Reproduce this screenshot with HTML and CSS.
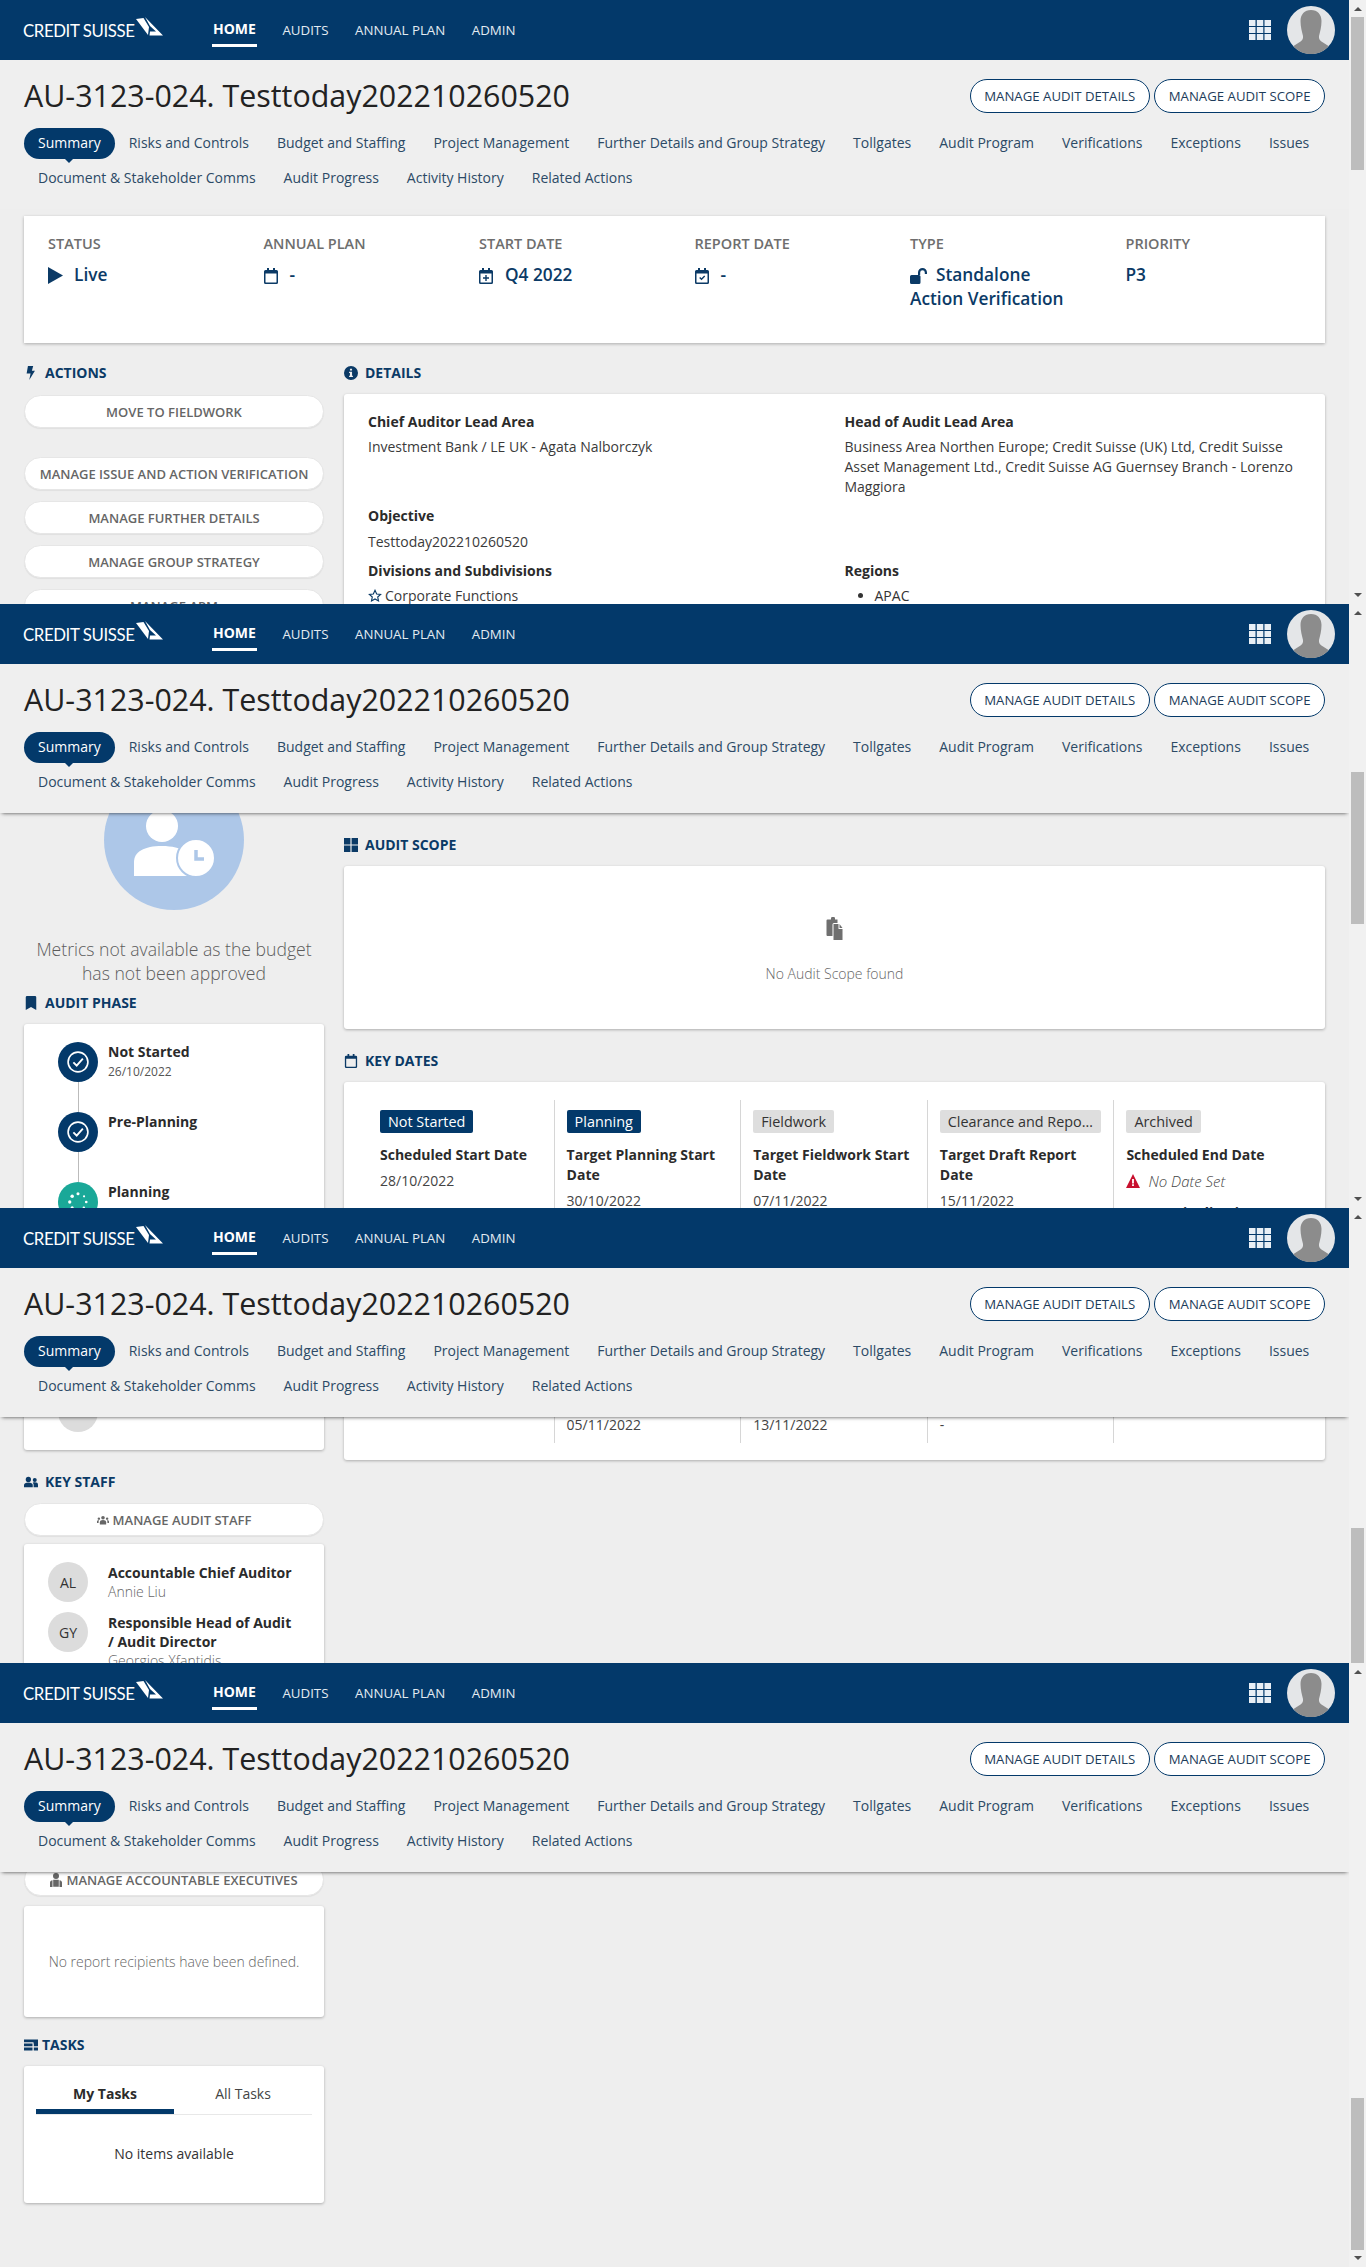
FILE: index.html
```html
<!DOCTYPE html>
<html lang="en">
<head>
<meta charset="utf-8">
<title>AU-3123-024. Testtoday202210260520</title>
<link rel="stylesheet" href="styles.css">
</head>
<body>
<svg class="sprite" xmlns="http://www.w3.org/2000/svg">
  <symbol id="i-logo" viewBox="0 0 28 20"><path d="M0 2 L7.5 1 L13 10 L12 18 Z"/><path d="M9 0 L27 18.500 L13.500 18.500 L14 14.500 L20 14.500 L14 9 Z"/></symbol>
  <symbol id="i-grid" viewBox="0 0 22 20"><path d="M0 0h6.5v6H0zM7.8 0h6.5v6H7.8zM15.5 0H22v6h-6.5zM0 7h6.5v6H0zM7.8 7h6.5v6H7.8zM15.5 7H22v6h-6.5zM0 14h6.5v6H0zM7.8 14h6.5v6H7.8zM15.5 14H22v6h-6.5z"/></symbol>
  <symbol id="i-avatar" viewBox="0 0 48 48"><circle cx="24" cy="24" r="24" fill="#e4e6e8"/><path d="M24 4c6.5 0 10.5 4.5 10.5 11 0 6-1.5 11-2.500 15-.5 3 1 5 4 6.500l5.500 3.500C37.500 45.500 31 48 24 48s-13.500-2.500-17.500-8L12 36.500c3-1.500 4.500-3.500 4-6.500-1-4-2.500-9-2.500-15C13.500 8.500 17.500 4 24 4z" fill="#8c8c8c"/></symbol>
  <symbol id="i-play" viewBox="0 0 16 18"><path d="M0 0l16 9L0 18z"/></symbol>
  <symbol id="i-cal" viewBox="0 0 14 16"><path d="M3 0h2v2h4V0h2v2h1.500A1.500 1.500 0 0 1 14 3.500v11a1.500 1.500 0 0 1-1.500 1.500h-11A1.500 1.500 0 0 1 0 14.500v-11A1.500 1.500 0 0 1 1.500 2H3zM1.500 5.500v8.500a.5.500 0 0 0 .5.500h10a.5.500 0 0 0 .5-.5V5.500z"/></symbol>
  <symbol id="i-calplus" viewBox="0 0 14 16"><path d="M3 0h2v2h4V0h2v2h1.500A1.500 1.500 0 0 1 14 3.500v11a1.500 1.500 0 0 1-1.500 1.500h-11A1.500 1.500 0 0 1 0 14.500v-11A1.500 1.500 0 0 1 1.500 2H3zM1.500 5.500v8.500a.5.500 0 0 0 .5.500h10a.5.500 0 0 0 .5-.5V5.500z"/><path d="M6.300 7h1.400v2.300H10v1.400H7.700V13H6.300v-2.300H4V9.300h2.300z"/></symbol>
  <symbol id="i-calcheck" viewBox="0 0 14 16"><path d="M3 0h2v2h4V0h2v2h1.500A1.500 1.500 0 0 1 14 3.500v11a1.500 1.500 0 0 1-1.500 1.500h-11A1.500 1.500 0 0 1 0 14.500v-11A1.500 1.500 0 0 1 1.500 2H3zM1.500 5.500v8.500a.5.500 0 0 0 .5.500h10a.5.500 0 0 0 .5-.5V5.500z"/><path d="M4.200 10l1 -1 1.300 1.300 2.700-2.800 1 1-3.700 3.800z"/></symbol>
  <symbol id="i-unlock" viewBox="0 0 17 16"><path d="M0 8.500A1.500 1.500 0 0 1 1.500 7H9a1.500 1.500 0 0 1 1.500 1.500V14.500A1.500 1.500 0 0 1 9 16H1.500A1.500 1.500 0 0 1 0 14.500z"/><path d="M8 7V4.500a4.500 4.500 0 0 1 9 0V6h-2.200V4.500a2.300 2.300 0 0 0-4.600 0V7z"/></symbol>
  <symbol id="i-bolt" viewBox="0 0 10 16"><path d="M1.500 0h6L6 5.500h3.500L3 16l1.500-7.500H0z"/></symbol>
  <symbol id="i-info" viewBox="0 0 16 16"><path fill-rule="evenodd" d="M8 0a8 8 0 1 1 0 16A8 8 0 0 1 8 0zM6.800 3v2.200h2.400V3zM5.800 6.500v1.400h1v3.300h-1v1.400h4.400v-1.400h-1V6.500z"/></symbol>
  <symbol id="i-star" viewBox="0 0 16 16"><path fill="none" stroke="currentColor" stroke-width="1.300" d="M8 1.500l1.900 4.200 4.500.5-3.300 3 .9 4.500L8 11.400l-4 2.300.9-4.500-3.300-3 4.500-.5z"/></symbol>
  <symbol id="i-bookmark" viewBox="0 0 12 16"><path d="M0 1.500A1.500 1.500 0 0 1 1.500 0h9A1.500 1.500 0 0 1 12 1.500V16L6 12.500 0 16z"/></symbol>
  <symbol id="i-squares" viewBox="0 0 14 14"><path d="M0 0h6.400v6.400H0zM7.600 0H14v6.400H7.600zM0 7.600h6.400V14H0zM7.600 7.600H14V14H7.600z"/></symbol>
  <symbol id="i-files" viewBox="0 0 16 23"><path d="M2 2.500h2.500V1.200A1.200 1.200 0 0 1 5.700 0h1.600a1.200 1.200 0 0 1 1.200 1.200v1.300H11V6H7.500A1.500 1.500 0 0 0 6 7.500V19H1a1 1 0 0 1-1-1V3.500a1 1 0 0 1 1-1z"/><path d="M7 7h5v5h4v11H7z"/><path d="M13 7l3 4h-3z"/></symbol>
  <symbol id="i-check" viewBox="0 0 20 20"><circle cx="10" cy="10" r="9" fill="none" stroke="#fff" stroke-width="1.500"/><path d="M5.800 10.400l3 3 5.600-6.400" fill="none" stroke="#fff" stroke-width="1.700"/></symbol>
  <symbol id="i-spin" viewBox="0 0 20 20" fill="#fff"><circle cx="10" cy="2.500" r="1.400"/><circle cx="15.500" cy="4.800" r="1"/><circle cx="17.500" cy="10" r="1.200"/><circle cx="15.300" cy="15.300" r="1.100"/><circle cx="10" cy="17.500" r="1.300"/><circle cx="4.700" cy="15.300" r="1.400"/><circle cx="2.500" cy="10" r="1.500"/><circle cx="4.700" cy="4.700" r="1.600"/></symbol>
  <symbol id="i-warn" viewBox="0 0 14 14"><path fill-rule="evenodd" d="M7 0l7 14H0zM6.100 5v4.500h1.800V5zM6.100 10.300V12h1.800v-1.700z"/></symbol>
  <symbol id="i-users" viewBox="0 0 16 12"><circle cx="5" cy="3" r="3"/><path d="M0 12V9.500C0 7.500 2 6.500 5 6.500s5 1 5 3V12z"/><circle cx="12.300" cy="3.800" r="2.300"/><path d="M11 12V9.200c0-1-.4-1.800-1-2.400.7-.3 1.500-.4 2.300-.4 2.200 0 3.700 .9 3.700 2.600v3z"/></symbol>
  <symbol id="i-team" viewBox="0 0 16 12"><circle cx="8" cy="3" r="2.400"/><path d="M3.800 12V9c0-1.800 1.900-3 4.200-3s4.200 1.200 4.200 3v3z"/><circle cx="2.500" cy="4.200" r="1.600"/><circle cx="13.500" cy="4.200" r="1.600"/><path d="M0 10V8c0-1 .8-1.700 2.800-1.700-.4.600-.7 1.400-.7 2.400v1.300zM16 10V8c0-1-.8-1.700-2.800-1.700.4.600.7 1.400.7 2.400v1.300z"/></symbol>
  <symbol id="i-exec" viewBox="0 0 12 14"><circle cx="6" cy="3" r="3"/><path d="M3.200 6.800h5.600v7H3.200zM0 14v-4.500c0-1.200 1-2 2.500-2.300V14zM12 14V9.500c0-1.200-1-2-2.500-2.300V14z"/></symbol>
  <symbol id="i-tasks" viewBox="0 0 14 11"><path d="M0 0h14v2.700H0zM0 4h8.500v2.700H0zM9.800 4H14v2.700H9.800zM0 8h8.500v3H0zM9.800 8H14v3H9.800zM9.500 2.700H14V4H9.500z"/></symbol>
</svg>

<section class="frame frame-1">
  <div class="main">
    <header class="topbar">
      <div class="brand"><span class="brand-name">CREDIT SUISSE</span><svg class="brand-mark"><use href="#i-logo"/></svg></div>
      <nav class="topnav"><a class="topnav-item active">HOME</a><a class="topnav-item">AUDITS</a><a class="topnav-item">ANNUAL PLAN</a><a class="topnav-item">ADMIN</a></nav>
      <svg class="apps"><use href="#i-grid"/></svg>
      <svg class="avatar"><use href="#i-avatar"/></svg>
    </header>
    <div class="subhead flat">
      <div class="title-row"><h1>AU-3123-024. Testtoday202210260520</h1><div class="title-actions"><a class="outline-btn">MANAGE AUDIT DETAILS</a><a class="outline-btn">MANAGE AUDIT SCOPE</a></div></div>
      <ul class="tabs"><li class="tab active">Summary</li><li class="tab">Risks and Controls</li><li class="tab">Budget and Staffing</li><li class="tab">Project Management</li><li class="tab">Further Details and Group Strategy</li><li class="tab">Tollgates</li><li class="tab">Audit Program</li><li class="tab">Verifications</li><li class="tab">Exceptions</li><li class="tab">Issues</li><li class="tab">Document &amp; Stakeholder Comms</li><li class="tab">Audit Progress</li><li class="tab">Activity History</li><li class="tab">Related Actions</li></ul>
    </div>
    <div class="summary card">
      <div class="fact"><div class="fact-label">STATUS</div><div class="fact-value"><svg class="fact-ico play"><use href="#i-play"/></svg>Live</div></div>
      <div class="fact"><div class="fact-label">ANNUAL PLAN</div><div class="fact-value"><svg class="fact-ico"><use href="#i-cal"/></svg>-</div></div>
      <div class="fact"><div class="fact-label">START DATE</div><div class="fact-value"><svg class="fact-ico"><use href="#i-calplus"/></svg>Q4 2022</div></div>
      <div class="fact"><div class="fact-label">REPORT DATE</div><div class="fact-value"><svg class="fact-ico"><use href="#i-calcheck"/></svg>-</div></div>
      <div class="fact"><div class="fact-label">TYPE</div><div class="fact-value"><svg class="fact-ico wide"><use href="#i-unlock"/></svg>Standalone Action Verification</div></div>
      <div class="fact"><div class="fact-label">PRIORITY</div><div class="fact-value">P3</div></div>
    </div>
    <div class="columns first">
      <div class="left">
        <h2 class="sec-title"><svg><use href="#i-bolt"/></svg>ACTIONS</h2>
        <div class="stack">
          <a class="pill gap-after">MOVE TO FIELDWORK</a>
          <a class="pill">MANAGE ISSUE AND ACTION VERIFICATION</a>
          <a class="pill">MANAGE FURTHER DETAILS</a>
          <a class="pill">MANAGE GROUP STRATEGY</a>
          <a class="pill">MANAGE APM</a>
        </div>
      </div>
      <div class="right">
        <h2 class="sec-title"><svg><use href="#i-info"/></svg>DETAILS</h2>
        <div class="card details">
          <div class="detail"><h3>Chief Auditor Lead Area</h3><p>Investment Bank / LE UK - Agata Nalborczyk</p></div>
          <div class="detail"><h3>Head of Audit Lead Area</h3><p>Business Area Northen Europe; Credit Suisse (UK) Ltd, Credit Suisse Asset Management Ltd., Credit Suisse AG Guernsey Branch - Lorenzo Maggiora</p></div>
          <div class="detail full"><h3>Objective</h3><p>Testtoday202210260520</p></div>
          <div class="detail"><h3>Divisions and Subdivisions</h3><p><svg class="star"><use href="#i-star"/></svg>Corporate Functions</p></div>
          <div class="detail"><h3>Regions</h3><ul class="regions"><li>APAC</li></ul></div>
        </div>
      </div>
    </div>
  </div>
  <div class="scrollbar"><i class="arrow up"></i><i class="thumb t1"></i><i class="arrow down"></i></div>
</section>

<section class="frame frame-2">
  <div class="main">
    <header class="topbar">
      <div class="brand"><span class="brand-name">CREDIT SUISSE</span><svg class="brand-mark"><use href="#i-logo"/></svg></div>
      <nav class="topnav"><a class="topnav-item active">HOME</a><a class="topnav-item">AUDITS</a><a class="topnav-item">ANNUAL PLAN</a><a class="topnav-item">ADMIN</a></nav>
      <svg class="apps"><use href="#i-grid"/></svg>
      <svg class="avatar"><use href="#i-avatar"/></svg>
    </header>
    <div class="subhead">
      <div class="title-row"><h1>AU-3123-024. Testtoday202210260520</h1><div class="title-actions"><a class="outline-btn">MANAGE AUDIT DETAILS</a><a class="outline-btn">MANAGE AUDIT SCOPE</a></div></div>
      <ul class="tabs"><li class="tab active">Summary</li><li class="tab">Risks and Controls</li><li class="tab">Budget and Staffing</li><li class="tab">Project Management</li><li class="tab">Further Details and Group Strategy</li><li class="tab">Tollgates</li><li class="tab">Audit Program</li><li class="tab">Verifications</li><li class="tab">Exceptions</li><li class="tab">Issues</li><li class="tab">Document &amp; Stakeholder Comms</li><li class="tab">Audit Progress</li><li class="tab">Activity History</li><li class="tab">Related Actions</li></ul>
    </div>
    <div class="columns second">
      <div class="left">
        <div class="metric-pic">
          <svg class="metric-svg" viewBox="0 0 140 140"><circle cx="70" cy="70" r="70" fill="#adc7e8"/><circle cx="58" cy="56" r="16" fill="#fff"/><path d="M30 106V92c0-10 10-16 28-16 10 0 18 2 24 6l4 24z" fill="#fff"/><circle cx="92" cy="88" r="19" fill="#fff" stroke="#adc7e8" stroke-width="2"/><path d="M92 80v9h8" fill="none" stroke="#adc7e8" stroke-width="3.500"/></svg>
        </div>
        <p class="metric-note">Metrics not available as the budget has not been approved</p>
        <h2 class="sec-title tight"><svg><use href="#i-bookmark"/></svg>AUDIT PHASE</h2>
        <div class="card phases">
          <div class="phase"><span class="phase-dot done"><svg><use href="#i-check"/></svg></span><div><h3>Not Started</h3><small>26/10/2022</small></div></div>
          <div class="phase"><span class="phase-dot done"><svg><use href="#i-check"/></svg></span><div><h3>Pre-Planning</h3></div></div>
          <div class="phase"><span class="phase-dot now"><svg><use href="#i-spin"/></svg></span><div><h3>Planning</h3></div></div>
        </div>
      </div>
      <div class="right pushed">
        <h2 class="sec-title"><svg><use href="#i-squares"/></svg>AUDIT SCOPE</h2>
        <div class="card empty-scope"><svg class="files"><use href="#i-files"/></svg><p>No Audit Scope found</p></div>
        <h2 class="sec-title spaced"><svg><use href="#i-cal"/></svg>KEY DATES</h2>
        <div class="card dates">
          <div class="date-col"><span class="tag on">Not Started</span><h3>Scheduled Start Date</h3><p>28/10/2022</p></div>
          <div class="date-col"><span class="tag on">Planning</span><h3>Target Planning Start Date</h3><p>30/10/2022</p></div>
          <div class="date-col"><span class="tag">Fieldwork</span><h3>Target Fieldwork Start Date</h3><p>07/11/2022</p></div>
          <div class="date-col"><span class="tag">Clearance and Reporting</span><h3>Target Draft Report Date</h3><p>15/11/2022</p></div>
          <div class="date-col"><span class="tag">Archived</span><h3>Scheduled End Date</h3><p class="no-date"><svg><use href="#i-warn"/></svg>No Date Set</p><h3 class="next">Target Finalisation</h3></div>
        </div>
      </div>
    </div>
  </div>
  <div class="scrollbar"><i class="arrow up"></i><i class="thumb t2"></i><i class="arrow down"></i></div>
</section>

<section class="frame frame-3">
  <div class="main">
    <header class="topbar">
      <div class="brand"><span class="brand-name">CREDIT SUISSE</span><svg class="brand-mark"><use href="#i-logo"/></svg></div>
      <nav class="topnav"><a class="topnav-item active">HOME</a><a class="topnav-item">AUDITS</a><a class="topnav-item">ANNUAL PLAN</a><a class="topnav-item">ADMIN</a></nav>
      <svg class="apps"><use href="#i-grid"/></svg>
      <svg class="avatar"><use href="#i-avatar"/></svg>
    </header>
    <div class="subhead">
      <div class="title-row"><h1>AU-3123-024. Testtoday202210260520</h1><div class="title-actions"><a class="outline-btn">MANAGE AUDIT DETAILS</a><a class="outline-btn">MANAGE AUDIT SCOPE</a></div></div>
      <ul class="tabs"><li class="tab active">Summary</li><li class="tab">Risks and Controls</li><li class="tab">Budget and Staffing</li><li class="tab">Project Management</li><li class="tab">Further Details and Group Strategy</li><li class="tab">Tollgates</li><li class="tab">Audit Program</li><li class="tab">Verifications</li><li class="tab">Exceptions</li><li class="tab">Issues</li><li class="tab">Document &amp; Stakeholder Comms</li><li class="tab">Audit Progress</li><li class="tab">Activity History</li><li class="tab">Related Actions</li></ul>
    </div>
    <div class="columns third">
      <div class="left">
        <div class="card phases-end"><span class="phase-dot idle"></span></div>
        <h2 class="sec-title spaced"><svg><use href="#i-users"/></svg>KEY STAFF</h2>
        <a class="pill staff-btn"><svg><use href="#i-team"/></svg>MANAGE AUDIT STAFF</a>
        <div class="card staff">
          <div class="person"><span class="initials">AL</span><div class="person-text"><h3>Accountable Chief Auditor</h3><small>Annie Liu</small></div></div>
          <div class="person"><span class="initials">GY</span><div class="person-text"><h3>Responsible Head of Audit / Audit Director</h3><small>Georgios Xfantidis</small></div></div>
        </div>
      </div>
      <div class="right">
        <div class="card dates-end">
          <div class="date-col"></div>
          <div class="date-col"><p>05/11/2022</p></div>
          <div class="date-col"><p>13/11/2022</p></div>
          <div class="date-col"><p>-</p></div>
          <div class="date-col"></div>
        </div>
      </div>
    </div>
  </div>
  <div class="scrollbar"><i class="arrow up"></i><i class="thumb t3"></i></div>
</section>

<section class="frame frame-4">
  <div class="main">
    <header class="topbar">
      <div class="brand"><span class="brand-name">CREDIT SUISSE</span><svg class="brand-mark"><use href="#i-logo"/></svg></div>
      <nav class="topnav"><a class="topnav-item active">HOME</a><a class="topnav-item">AUDITS</a><a class="topnav-item">ANNUAL PLAN</a><a class="topnav-item">ADMIN</a></nav>
      <svg class="apps"><use href="#i-grid"/></svg>
      <svg class="avatar"><use href="#i-avatar"/></svg>
    </header>
    <div class="subhead">
      <div class="title-row"><h1>AU-3123-024. Testtoday202210260520</h1><div class="title-actions"><a class="outline-btn">MANAGE AUDIT DETAILS</a><a class="outline-btn">MANAGE AUDIT SCOPE</a></div></div>
      <ul class="tabs"><li class="tab active">Summary</li><li class="tab">Risks and Controls</li><li class="tab">Budget and Staffing</li><li class="tab">Project Management</li><li class="tab">Further Details and Group Strategy</li><li class="tab">Tollgates</li><li class="tab">Audit Program</li><li class="tab">Verifications</li><li class="tab">Exceptions</li><li class="tab">Issues</li><li class="tab">Document &amp; Stakeholder Comms</li><li class="tab">Audit Progress</li><li class="tab">Activity History</li><li class="tab">Related Actions</li></ul>
    </div>
    <div class="columns fourth">
      <div class="left">
        <a class="pill staff-btn exec"><svg><use href="#i-exec"/></svg>MANAGE ACCOUNTABLE EXECUTIVES</a>
        <div class="card recipients"><p>No report recipients have been defined.</p></div>
        <h2 class="sec-title close"><svg><use href="#i-tasks"/></svg>TASKS</h2>
        <div class="card tasks">
          <div class="task-tabs"><span class="task-tab active">My Tasks</span><span class="task-tab">All Tasks</span></div>
          <p>No items available</p>
        </div>
      </div>
    </div>
  </div>
  <div class="scrollbar"><i class="arrow up"></i><i class="thumb t4"></i><i class="arrow down"></i></div>
</section>
</body>
</html>
```

FILE: styles.css
```css
* { box-sizing: border-box; }
html, body { margin: 0; padding: 0; }
body { background: #eeeeee; font-family: "Open Sans", "Liberation Sans", sans-serif; font-size: 14px; color: #333; width: 1366px; }
h1, h2, h3, p, ul { margin: 0; padding: 0; }
ul { list-style: none; }
.sprite { position: absolute; width: 0; height: 0; }

.frame { display: grid; grid-template-columns: 1349px 17px; height: 604px; overflow: hidden; }
.frame-3 { height: 455px; }
.main { position: relative; overflow: hidden; background: #eeeeee; }

.scrollbar { display: flex; flex-direction: column; align-items: center; background: #f1f1f1; height: 100%; }
.arrow { width: 0; height: 0; border-left: 4px solid transparent; border-right: 4px solid transparent; flex: none; }
.arrow.up { border-bottom: 4px solid #505050; margin-top: 7px; }
.arrow.down { border-top: 4px solid #505050; margin-top: auto; margin-bottom: 7px; }
.thumb { width: 13px; background: #bdbdbd; flex: none; }
.t1 { margin-top: 6px; height: 153px; }
.t2 { margin-top: 157px; height: 152px; }
.t3 { margin-top: 309px; height: 150px; }
.t4 { margin-top: 424px; height: 152px; }

.topbar { position: relative; z-index: 3; display: flex; align-items: center; height: 60px; background: #03396a; color: #fff; padding-left: 23px; padding-right: 14px; }
.brand { display: flex; align-items: flex-start; width: 189px; }
.brand-name { font-family: "Lato", "Open Sans", sans-serif; font-weight: 400; font-size: 16.800px; line-height: 20px; letter-spacing: -0.4px; margin-top: 1px; white-space: nowrap; }
.brand-mark { width: 28px; height: 20px; fill: #fff; margin-left: 2px; margin-top: -3px; }
.topnav { display: flex; gap: 24.500px; align-items: center; }
.topnav-item { font-size: 13.300px; line-height: 20px; position: relative; padding: 0 1px; color: #e3ebf2; }
.topnav-item.active { font-size: 14px; font-weight: 700; color: #fff; margin-top: -3px; }
.topnav-item.active::after { content: ""; position: absolute; left: 0; right: 0; top: 25px; height: 3px; background: #fff; }
.apps { width: 22px; height: 20px; fill: #e8eff5; margin-left: auto; }
.avatar { width: 48px; height: 48px; margin-left: 16px; }

.subhead { position: relative; z-index: 2; height: 149px; background: #efefef; padding: 19px 24px 0; box-shadow: 0 2px 4px -2px rgba(0, 0, 0, .75); }
.subhead.flat { box-shadow: none; }
.title-row { display: flex; justify-content: space-between; align-items: center; height: 34px; margin-bottom: 15px; }
h1 { font-size: 30.400px; font-weight: 400; line-height: 34px; color: #222; white-space: nowrap; }
.title-actions { display: flex; gap: 4.500px; }
.outline-btn { display: block; height: 34px; line-height: 32px; padding: 0 13.500px; border: 1px solid #03396a; border-radius: 17px; background: #fff; color: #1d3c5a; font-size: 13.200px; white-space: nowrap; }
.tabs { display: flex; flex-wrap: wrap; row-gap: 4px; }
.tab { position: relative; height: 31px; line-height: 29px; padding: 0 14px; font-size: 14px; color: #2c4a66; white-space: nowrap; }
.tab.active { background: #03396a; color: #fff; border-radius: 16px; }
.tab.active::after { content: ""; position: absolute; left: 50%; top: 31px; margin-left: -4px; border-left: 4px solid transparent; border-right: 4px solid transparent; border-top: 4px solid #03396a; }

.card { background: #fff; border-radius: 3px; box-shadow: 0 1px 3px rgba(0, 0, 0, .28); }
.summary { display: grid; grid-template-columns: repeat(6, 215.500px); margin: 7px 24px 0; height: 127px; padding: 19px 24px 0; border-radius: 0; }
.fact-label { font-size: 14.500px; font-weight: 600; line-height: 18px; color: #6e6e6e; margin-bottom: 10px; }
.fact-value { font-size: 17.300px; font-weight: 600; line-height: 24px; color: #0b3a66; padding-right: 45px; }
.fact-ico { width: 14px; height: 16px; fill: #0b3a66; vertical-align: -3px; margin-right: 12px; }
.fact-ico.play { width: 15px; height: 17px; margin-right: 11px; }
.fact-ico.wide { width: 17px; margin-right: 9px; }

.columns { display: grid; grid-template-columns: 300px 981px; column-gap: 20px; padding: 0 24px; align-items: start; }
.columns.first { margin-top: 20px; }
.columns.second { margin-top: -43px; }
.columns.third { margin-top: -10px; }
.columns.fourth { margin-top: -9px; }
.right.pushed { margin-top: 65px; }

.sec-title { display: flex; align-items: center; gap: 7px; height: 20px; padding-bottom: 1px; margin-bottom: 11px; font-size: 14px; font-weight: 700; color: #0b3a66; }
.sec-title svg { width: 14px; height: 14px; fill: #0b3a66; flex: none; }
.sec-title.spaced { margin-top: 22px; }
.sec-title.tight { margin-top: 8px; }
.sec-title.close { margin-top: 18px; gap: 4px; }

.stack { display: flex; flex-direction: column; gap: 10px; }
.pill { display: flex; align-items: center; justify-content: center; gap: 4px; height: 33px; border-radius: 17px; background: #fff; border: 1px solid #e6e6e6; box-shadow: 0 1px 1px rgba(0, 0, 0, .06); color: #666; font-size: 13px; font-weight: 600; white-space: nowrap; margin-top: 1px; flex: none; }
.pill.gap-after { margin-bottom: 18px; }
.staff-btn { margin-top: 2px; }
.staff-btn svg { width: 12px; height: 10px; fill: #666; }
.staff-btn.exec svg { width: 12px; height: 14px; }
.staff-btn.exec { margin-top: 0; }

.details { display: grid; grid-template-columns: 476.500px 1fr; column-gap: 0; row-gap: 9px; padding: 18px 24px 24px; }
.detail.full { grid-column: 1 / -1; }
.detail h3, .dates h3, .phase h3, .person h3 { font-size: 14px; font-weight: 700; line-height: 20px; color: #2b2b2b; }
.detail h3 { margin-bottom: 5px; }
.detail p { line-height: 20px; font-size: 14px; color: #3a3a3a; font-weight: 400; }
.detail.full h3 { margin-bottom: 6px; }
.star { width: 14px; height: 14px; color: #0b3a66; vertical-align: -2px; margin-right: 3px; }
.regions { list-style: disc; padding-left: 30px; line-height: 20px; }

.metric-pic { display: flex; justify-content: center; height: 141px; }
.metric-svg { width: 140px; height: 140px; }
.metric-note { margin-top: 26px; text-align: center; font-size: 17.600px; line-height: 24px; font-weight: 300; color: #5c5c5c; padding: 0 10px; }

.phases { padding: 18px 0 0 34px; height: 300px; }
.phase { position: relative; display: flex; gap: 10px; height: 70px; }
.phase:not(:last-child)::before { content: ""; position: absolute; left: 19.500px; top: 40px; height: 30px; width: 1px; background: #bbb; }
.phase h3 { margin-top: 0; line-height: 20px; }
.phase small { display: block; font-size: 12px; line-height: 20px; color: #555; }
.phase-dot { display: flex; align-items: center; justify-content: center; width: 40px; height: 40px; border-radius: 50%; flex: none; }
.phase-dot svg { width: 22px; height: 22px; }
.phase-dot.done { background: #03396a; }
.phase-dot.now { background: #1aa898; }
.phase-dot.idle { background: #dcdcdc; }
.phases-end { display: flow-root; height: 43px; padding: 0 0 0 34px; }
.phases-end .phase-dot { margin-top: -15px; }

.empty-scope { height: 163px; display: flex; flex-direction: column; align-items: center; padding-top: 51px; }
.files { width: 21px; height: 23px; fill: #6f6f6f; }
.empty-scope p { margin-top: 24px; font-size: 14px; font-weight: 300; line-height: 20px; color: #666; }

.dates, .dates-end { display: grid; grid-template-columns: repeat(5, minmax(0, 1fr)); padding: 18px 24px; }
.date-col { padding: 10px 12px 0; border-right: 1px solid #d6d6d6; min-width: 0; }
.date-col:last-child { border-right: 0; }
.tag { display: block; width: max-content; max-width: 100%; height: 23px; line-height: 23px; padding: 0 8px; border-radius: 2px; background: #dedede; color: #333; font-size: 14.400px; overflow: hidden; text-overflow: ellipsis; white-space: nowrap; }
.tag.on { background: #03396a; color: #fff; }
.dates h3 { margin-top: 12px; }
.dates p, .dates-end p { margin-top: 6px; line-height: 20px; font-size: 14px; color: #444; }
.dates h3.next { margin-top: 12px; }
.dates .no-date { display: flex; align-items: center; gap: 8px; font-size: 15px; font-style: italic; font-weight: 300; }
.no-date svg { width: 14px; height: 14px; fill: #c8102e; }
.dates-end { height: 53px; padding-top: 0; padding-bottom: 17px; }
.dates-end .date-col { padding-top: 0; height: 36px; }
.dates-end p { margin-top: 8px; }

.staff { margin-top: 8px; padding: 18px 30px 18px 24px; height: 200px; }
.person { display: flex; gap: 20px; margin-bottom: 10px; }
.person-text { padding-top: 1px; }
.initials { display: flex; align-items: center; justify-content: center; width: 40px; height: 40px; border-radius: 50%; background: #dcdcdc; color: #333; font-size: 14px; flex: none; }
.person h3 { line-height: 19px; }
.person small { display: block; font-size: 14px; line-height: 19px; color: #666; font-weight: 300; }

.recipients { margin-top: 10px; height: 111px; display: flex; align-items: center; justify-content: center; }
.recipients p { font-size: 14px; font-weight: 300; color: #666; white-space: nowrap; }
.tasks { height: 137px; padding: 12px 12px 0; text-align: center; }
.task-tabs { display: flex; height: 37px; border-bottom: 1px solid #e8e8e8; }
.task-tab { flex: 1; position: relative; line-height: 32px; font-size: 14px; color: #444; }
.task-tab.active { font-weight: 700; color: #2b2b2b; }
.task-tab.active::after { content: ""; position: absolute; left: 0; right: 0; bottom: 0; height: 5px; background: #03396a; }
.tasks p { margin-top: 29px; line-height: 20px; font-size: 14px; color: #333; }
```
